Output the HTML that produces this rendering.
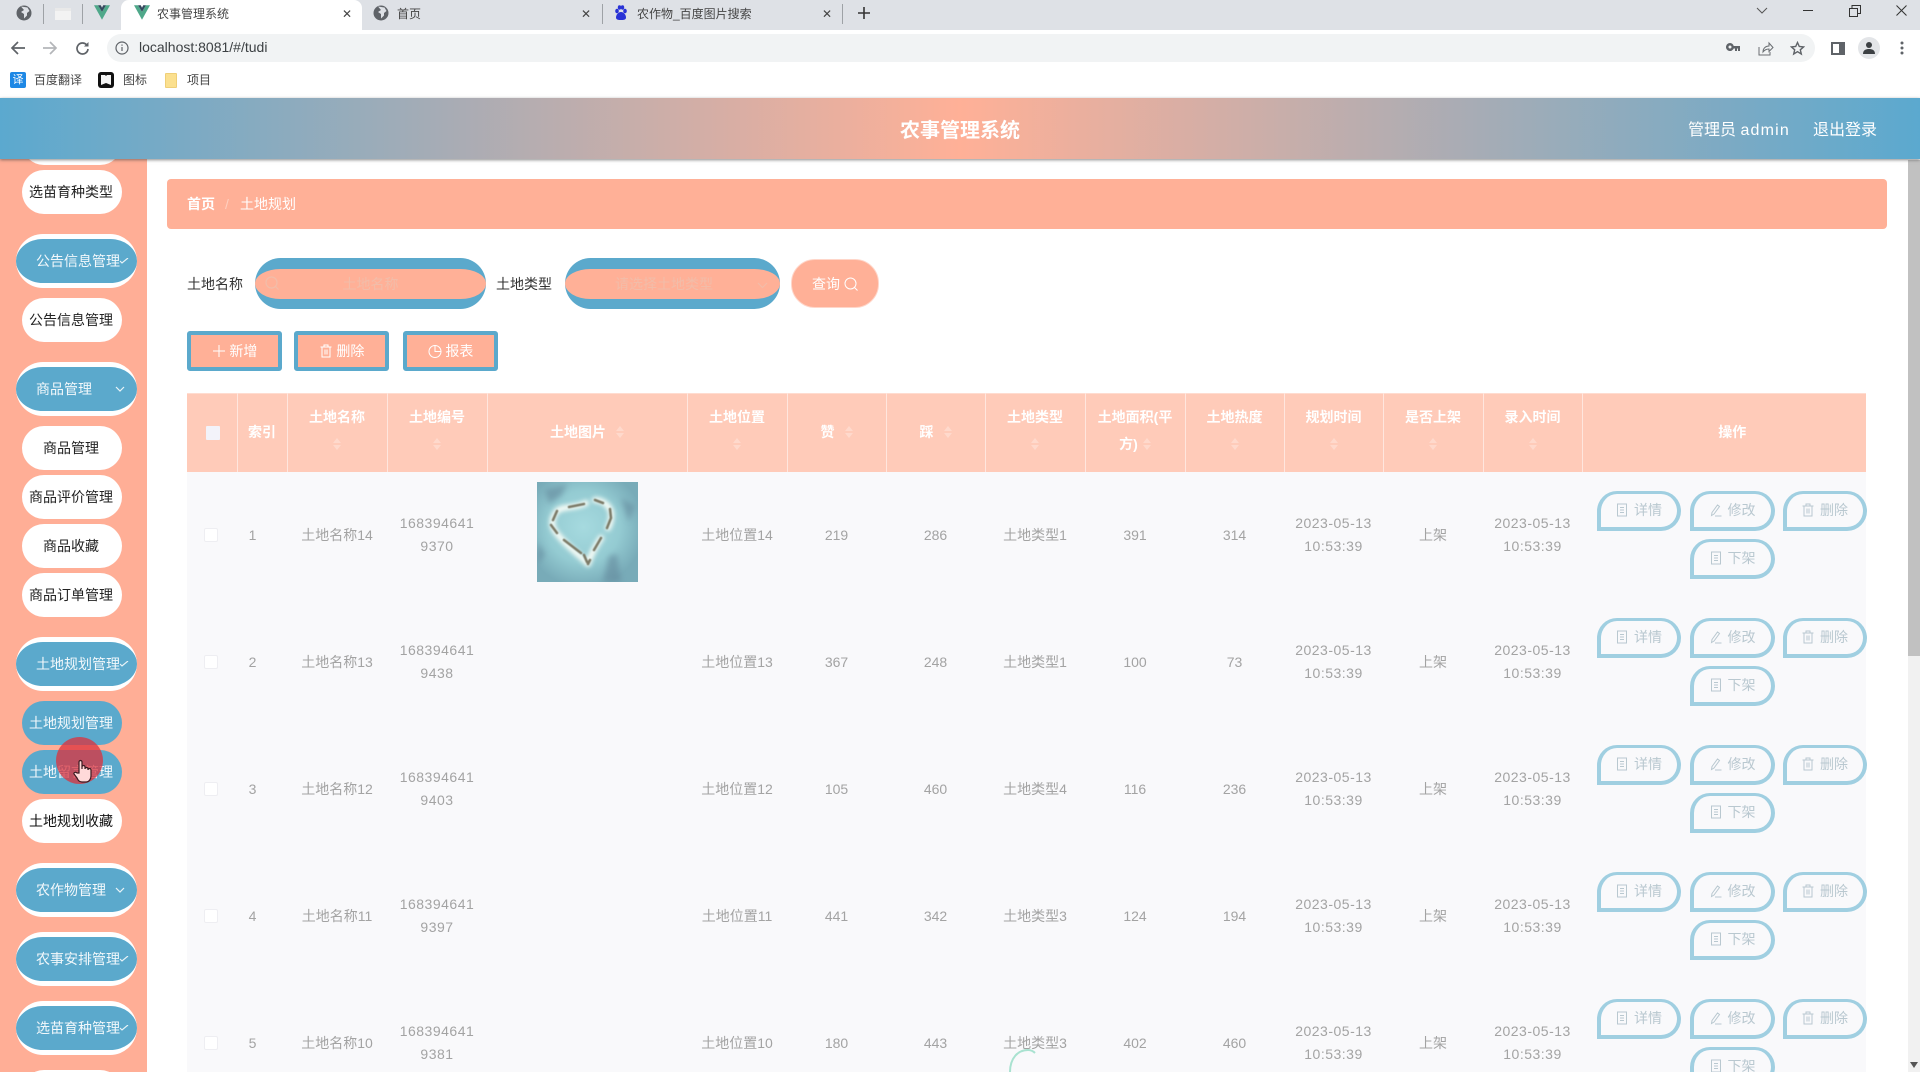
<!DOCTYPE html>
<html lang="zh"><head><meta charset="utf-8"><title>农事管理系统</title>
<style>
*{box-sizing:border-box}
html,body{margin:0;padding:0;width:1920px;height:1072px;overflow:hidden;background:#fff;font-family:"Liberation Sans","Noto Sans CJK SC",sans-serif}
#root{position:absolute;left:0;top:0;width:1920px;height:1072px;overflow:hidden;background:#fff}
.a{position:absolute}
#tabs{left:0;top:0;width:1920px;height:30px;background:#dee1e6}
#pin{left:0;top:0;width:121px;height:30px;background:#dee1e6;border-bottom-right-radius:8px}
#atab{left:121px;top:0;width:241px;height:30px;background:#fff;border-radius:8px 8px 0 0}
.sep{width:1px;height:20px;top:4px;background:#9ea2a6}
.tt{font-size:12px;color:#454545;top:4px;line-height:20px;white-space:nowrap}
.x{font-size:12px;color:#444;top:4px;line-height:20px}
#addr{left:107px;top:34px;width:1708px;height:28px;border-radius:14px;background:#f1f3f4}
#url{left:139px;top:37px;font-size:14px;line-height:20px;color:#3c4043;white-space:nowrap}
.bm{font-size:12px;color:#444;top:70px;line-height:20px;white-space:nowrap}
#hd{left:0;top:98px;width:1920px;height:61px;background:linear-gradient(90deg,#5ba9cf 0%,#ffb097 50%,#5ba9cf 100%);box-shadow:0 1px 3px rgba(60,60,60,.6);z-index:5}
#hd span{position:absolute;color:#fff;white-space:nowrap}
#side{left:0;top:159px;width:147px;height:913px;background:#ffae96;overflow:hidden}
.p{position:absolute;left:22px;width:100px;height:44px;border-radius:22px;background:#fff;color:#222;font-size:14px;line-height:44px;text-align:center;white-space:nowrap;padding-right:2px}
.p.on{background:#5ba9cc;color:#f2f8fb}
.g{position:absolute;left:16px;width:121px;height:54px;border-radius:27px;background:#5ba9cc;border-top:5px solid #fff;border-bottom:5px solid #fff;color:#f2f8fb;font-size:14px;line-height:44px;padding-left:20px;white-space:nowrap}
.g svg{position:absolute;top:19px;width:10px;height:6px;fill:none;stroke:#eaf4f8;stroke-width:1.2}
#bc{left:167px;top:179px;width:1720px;height:50px;background:#ffb097;border-radius:4px;color:#fff;font-size:14px;line-height:50px}
.lb{font-size:14px;line-height:20px;color:#333;top:274px;white-space:nowrap}
.ipt{top:258px;height:51px;border-radius:26px;background:#ffb097;border-top:11px solid #5ba9cc;border-bottom:10px solid #5ba9cc;color:#f2bda9;font-size:14px;line-height:31px;text-align:center;white-space:nowrap}
#q{left:791px;top:259px;width:88px;height:49px;border-radius:24px;background:#ffb097;border:1px solid #ffd6c9;color:#fff;font-size:14px;line-height:48px;padding-left:20px}
.b{top:331px;height:40px;background:#ffb097;border:4px solid #5ba9cc;border-radius:3px;color:#fff;font-size:14px;line-height:33px;text-align:center;white-space:nowrap}
.b svg,#q svg{vertical-align:-2px;width:14px;height:14px;fill:none;stroke:#fff;stroke-width:1}
#tb{left:187px;top:393px;width:1679px;border-collapse:collapse;table-layout:fixed;font-size:14px;color:#a3a3a3;text-align:center}
#tb th{height:78px;background:#ffcbb9;color:#fff;font-weight:700;border-right:1px solid #ffe6de;border-top:1px solid #ffdcd0;line-height:27px;padding:0 10px;vertical-align:middle}
#tb th:last-child{border-right:0;padding-left:26px}
#tb td{height:127px;background:#f9f9fb;line-height:23px;padding:0 10px;vertical-align:middle;position:relative}
.two{position:relative;top:-2px;word-break:break-all}
.s{display:inline-block;width:8px;height:12px;vertical-align:-1px;margin-left:10px;position:relative}
.s:before,.s:after{content:"";position:absolute;left:0;border-left:4px solid transparent;border-right:4px solid transparent}
.s:before{top:0;border-bottom:5px solid rgba(255,255,255,.28)}
.s:after{bottom:0;border-top:5px solid rgba(255,255,255,.28)}
.two .s{margin-left:0}
.n{letter-spacing:.5px;margin:0 -4px;white-space:nowrap}
.cb{display:block;margin:0 auto 0 7px;width:14px;height:14px;background:#fff;border:1px solid #eeeef2;border-radius:2px}
.o{position:absolute;height:40px;border:4px solid #a0cfe1;border-radius:20px 20px 20px 0;color:#b9c8d0;font-size:14px;line-height:32px;text-align:center;white-space:nowrap;background:#f9f9fb;border-top-width:3px}
.o svg{width:12px;height:14px;vertical-align:-2px;fill:none;stroke:#b9c8d0;stroke-width:1;margin-right:6px}
.o1{left:15px;width:84px}.o2{left:108px;width:85px}.o3{left:201px;width:84px}
.t1{top:19px}.t2{top:67px}
#sb{left:1908px;top:160px;width:12px;height:912px;background:#f1f1f1}
#th{left:0;top:0;width:12px;height:496px;background:#c1c1c1}
</style></head><body>
<div id="root">
<svg width="0" height="0" style="position:absolute"><defs>
<symbol id="doc" viewBox="0 0 12 14"><rect x="1.500" y="1" width="9" height="12"/><path d="M4 4.500h4M4 7h4M4 9.500h4"/></symbol>
<symbol id="pen" viewBox="0 0 12 14"><path d="M2 9.500 7.500 2l2 1.500L4 11l-2.500 1.500zM5 13h6.500"/></symbol>
<symbol id="del" viewBox="0 0 12 14"><rect x="2" y="3" width="8" height="10"/><path d="M.5 3h11M4 3V1h4v2M5 5.500v5M7 5.500v5"/></symbol>
<symbol id="vue" viewBox="0 0 20 18"><path d="M0 0h5l5 8 5-8h5L10 18z" fill="#4fa88a"/><path d="M5 0h3.500L10 3l1.500-3H15l-5 8z" fill="#34495e"/></symbol>
<symbol id="globe" viewBox="0 0 16 16"><circle cx="8" cy="8" r="7.500" fill="#5f6368"/><path d="M5 1.500 8 5 5 7l3 2 0 4.500 3-3V8l2.500-2-2-3.500z" fill="#dee1e6"/></symbol>
</defs></svg>

<div class="a" id="tabs"></div><div class="a" id="pin"></div><div class="a" id="atab"></div>
<svg class="a" style="left:16px;top:5px" width="16" height="16"><use href="#globe"/></svg>
<div class="a sep" style="left:43px"></div>
<div class="a" style="left:55px;top:8px;width:16px;height:12px;background:#f3f3f3;border-top:3px solid #e9e9e9"></div>
<div class="a sep" style="left:82px"></div>
<svg class="a" style="left:94px;top:5px" width="16" height="15"><use href="#vue"/></svg>
<svg class="a" style="left:134px;top:5px" width="16" height="15"><use href="#vue"/></svg>
<div class="a tt" style="left:157px">农事管理系统</div>
<div class="a x" style="left:342px">✕</div>
<svg class="a" style="left:373px;top:5px" width="16" height="16"><use href="#globe"/></svg>
<div class="a tt" style="left:397px">首页</div>
<div class="a x" style="left:581px">✕</div>
<div class="a sep" style="left:602px"></div>
<svg class="a" style="left:613px;top:5px" width="16" height="16" viewBox="0 0 16 16"><g fill="#2932d6"><ellipse cx="4" cy="6" rx="1.800" ry="2.300"/><ellipse cx="12" cy="6" rx="1.800" ry="2.300"/><ellipse cx="6.500" cy="2.500" rx="1.700" ry="2.200"/><ellipse cx="9.500" cy="2.500" rx="1.700" ry="2.200"/><path d="M8 7c-3 0-5 3-5 5.500S6 15 8 15s5 0 5-2.500S11 7 8 7z"/></g></svg>
<div class="a tt" style="left:637px">农作物_百度图片搜索</div>
<div class="a x" style="left:822px">✕</div>
<div class="a sep" style="left:842px"></div>
<svg class="a" style="left:857px;top:6px" width="14" height="14" fill="none" stroke="#333" stroke-width="1.600"><path d="M7 1v12M1 7h12"/></svg>
<svg class="a" style="left:1755px;top:6px" width="14" height="10" fill="none" stroke="#555"><path d="M2 2l5 5 5-5"/></svg>
<div class="a" style="left:1803px;top:10px;width:10px;height:1px;background:#333"></div>
<svg class="a" style="left:1849px;top:5px" width="12" height="12" fill="none" stroke="#333"><path d="M.5 3.500h8v8h-8zM3 3.500V.5h8.500v8H8.500"/></svg>
<svg class="a" style="left:1896px;top:5px" width="11" height="11" fill="none" stroke="#333"><path d="M.5.5l10 10M10.500.5l-10 10"/></svg>

<div class="a" id="addr"></div>
<svg class="a" style="left:10px;top:41px" width="16" height="14" fill="none" stroke="#5f6368" stroke-width="1.700"><path d="M15 7H2M8 1 2 7l6 6"/></svg>
<svg class="a" style="left:42px;top:41px" width="16" height="14" fill="none" stroke="#b4b6b9" stroke-width="1.700"><path d="M1 7h13M8 1l6 6-6 6"/></svg>
<svg class="a" style="left:75px;top:41px" width="15" height="15" fill="none" stroke="#5f6368" stroke-width="1.700"><path d="M13 8a5.500 5.500 0 1 1-1.500-4.300"/><path d="M13.500 1v4.500H9" fill="#5f6368" stroke="none"/></svg>
<svg class="a" style="left:115px;top:41px" width="14" height="14" fill="none" stroke="#5f6368" stroke-width="1.200"><circle cx="7" cy="7" r="6"/><path d="M7 6v4M7 3.500v1.200"/></svg>
<div class="a" id="url">localhost:8081/#/tudi</div>
<svg class="a" style="left:1726px;top:43px" width="15" height="10" fill="#5f6368"><path d="M4 0a4 4 0 1 0 3.700 5.500H9V8h2V5.500h1V8h2V3H7.700A4 4 0 0 0 4 0zm0 2.500a1.500 1.500 0 1 1 0 3 1.500 1.500 0 0 1 0-3z"/></svg>
<svg class="a" style="left:1758px;top:41px" width="16" height="15" fill="none" stroke="#6a6e72"><path d="M1 6v8h11V11M5 11c0-4 3-6 6-6V2l4 4.500-4 4V8c-3 0-4.500 1-6 3z"/></svg>
<svg class="a" style="left:1790px;top:41px" width="15" height="15" fill="none" stroke="#5f6368" stroke-width="1.400"><path d="M7.500 1.500l1.800 4 4.300.4-3.300 2.900 1 4.200-3.800-2.300-3.800 2.300 1-4.200L1.400 5.900l4.300-.4z"/></svg>
<div class="a" style="left:1831px;top:42px;width:14px;height:13px;border:2px solid #5f6368;border-right-width:6px"></div>
<div class="a" style="left:1858px;top:37px;width:22px;height:22px;border-radius:50%;background:#e3e5e8"></div>
<svg class="a" style="left:1862px;top:41px" width="14" height="14" fill="#3c4043"><circle cx="7" cy="4" r="3"/><path d="M1 13c0-4 3-5 6-5s6 1 6 5z"/></svg>
<svg class="a" style="left:1900px;top:41px" width="4" height="14" fill="#5f6368"><circle cx="2" cy="2" r="1.500"/><circle cx="2" cy="7" r="1.500"/><circle cx="2" cy="12" r="1.500"/></svg>

<div class="a" style="left:10px;top:72px;width:16px;height:16px;border-radius:2px;background:#1e88e5;color:#fff;font-size:11px;line-height:16px;text-align:center">译</div>
<div class="a bm" style="left:34px">百度翻译</div>
<div class="a" style="left:98px;top:72px;width:16px;height:16px;border-radius:3px;background:#111"></div>
<svg class="a" style="left:101px;top:75px" width="10" height="10" fill="#f4f4f4"><path d="M0 0h4l1 1 1-1h4v10L5 8 0 10z"/></svg>
<div class="a bm" style="left:123px">图标</div>
<div class="a" style="left:165px;top:73px;width:12px;height:15px;background:#fbe08f;border:1px solid #efcf78;border-radius:1px"></div>
<div class="a bm" style="left:187px">项目</div>

<div class="a" id="hd">
<span style="left:900px;top:19px;font-size:20px;line-height:28px;font-weight:700">农事管理系统</span>
<span style="left:1688px;top:21px;font-size:16px;line-height:24px">管理员 <span style="position:static;letter-spacing:1.200px">admin</span></span>
<span style="left:1813px;top:21px;font-size:16px;line-height:24px">退出登录</span>
</div>

<div class="a" id="side">
<div class="p" style="top:-38px"></div>
<div class="p" style="top:11px">选苗育种类型</div>
<div class="g" style="top:75px">公告信息管理<svg style="left:103px" viewBox="0 0 10 6"><path d="M1 3l2 2 6-5"/></svg></div>
<div class="p" style="top:139px">公告信息管理</div>
<div class="g" style="top:203px">商品管理<svg style="left:99px" viewBox="0 0 10 6"><path d="M1 1l4 4 4-4"/></svg></div>
<div class="p" style="top:267px">商品管理</div>
<div class="p" style="top:316px">商品评价管理</div>
<div class="p" style="top:365px">商品收藏</div>
<div class="p" style="top:414px">商品订单管理</div>
<div class="g" style="top:478px">土地规划管理<svg style="left:103px" viewBox="0 0 10 6"><path d="M1 3l2 2 6-5"/></svg></div>
<div class="p on" style="top:542px">土地规划管理</div>
<div class="p on" style="top:591px">土地留言管理</div>
<div class="p" style="top:640px;color:#111">土地规划收藏</div>
<div class="g" style="top:704px">农作物管理<svg style="left:99px" viewBox="0 0 10 6"><path d="M1 1l4 4 4-4"/></svg></div>
<div class="g" style="top:773px">农事安排管理<svg style="left:103px" viewBox="0 0 10 6"><path d="M1 3l2 2 6-5"/></svg></div>
<div class="g" style="top:842px">选苗育种管理<svg style="left:103px" viewBox="0 0 10 6"><path d="M1 3l2 2 6-5"/></svg></div>
<div class="p" style="top:911px"></div>
</div>
<div class="a" style="left:56px;top:737px;width:47px;height:47px;border-radius:50%;background:rgba(220,50,60,.75);z-index:6"></div>
<svg class="a" style="left:73px;top:759px;z-index:7" width="20" height="25" viewBox="0 0 20 25"><path d="M6 14V3a1.500 1.500 0 0 1 3 0v7l0-2a1.500 1.500 0 0 1 3 0v2a1.500 1.500 0 0 1 3 0v1a1.500 1.500 0 0 1 3 0v6c0 3-2 6-5 6H9c-3 0-4-2-5-4l-3-4c-.5-1.500 1.500-2.500 3-1z" fill="#ffd9d9" stroke="#3a1a20" stroke-width="1.200"/></svg>

<div class="a" id="bc"><span class="a" style="left:20px;font-weight:700">首页</span><span class="a" style="left:58px;color:#ffcfbf">/</span><span class="a" style="left:73px">土地规划</span></div>

<div class="a lb" style="left:187px">土地名称</div>
<div class="a ipt" style="left:255px;width:231px">土地名称</div>
<svg class="a" style="left:265px;top:276px;fill:none;stroke:#f2bda9;stroke-width:1.200" width="14" height="15"><circle cx="6.500" cy="6.500" r="5.500"/><path d="M10.500 10.500l3 3"/></svg>
<div class="a lb" style="left:496px">土地类型</div>
<div class="a ipt" style="left:565px;width:215px;padding-right:17px">请选择土地类型</div>
<svg class="a" style="left:757px;top:282px;fill:none;stroke:#f2bda9" width="11" height="7"><path d="M1 1l4.500 4.500L10 1"/></svg>
<div class="a" id="q">查询 <svg viewBox="0 0 14 14"><circle cx="6.500" cy="6.500" r="5.500"/><path d="M10.500 10.500l3 3"/></svg></div>

<div class="a b" style="left:187px;width:95px"><svg viewBox="0 0 14 14"><path d="M7 1v12M1 7h12"/></svg> 新增</div>
<div class="a b" style="left:294px;width:95px"><svg viewBox="0 0 12 14"><use href="#del"/></svg> 删除</div>
<div class="a b" style="left:403px;width:95px"><svg viewBox="0 0 14 14"><circle cx="7" cy="7.500" r="6"/><path d="M7 1.500v6h6"/></svg> 报表</div>

<table class="a" id="tb">
<colgroup><col style="width:50px"><col style="width:50px"><col style="width:100px"><col style="width:100px"><col style="width:200px"><col style="width:100px"><col style="width:99px"><col style="width:99px"><col style="width:100px"><col style="width:100px"><col style="width:99px"><col style="width:99px"><col style="width:100px"><col style="width:99px"><col style="width:284px"></colgroup>
<thead><tr>
<th style="padding:0"><span style="display:block;width:14px;height:14px;margin:0 0 0 19px;background:#f3f3fa;border-radius:1px"></span></th>
<th style="padding:0">索引</th>
<th><div class="two">土地名称<br><i class="s"></i></div></th>
<th><div class="two">土地编号<br><i class="s"></i></div></th>
<th>土地图片<i class="s"></i></th>
<th><div class="two">土地位置<br><i class="s"></i></div></th>
<th>赞<i class="s"></i></th>
<th>踩<i class="s"></i></th>
<th><div class="two">土地类型<br><i class="s"></i></div></th>
<th style="padding:0 8px"><div class="two">土地面积(平<br>方)<i class="s" style="margin-left:5px"></i></div></th>
<th><div class="two">土地热度<br><i class="s"></i></div></th>
<th><div class="two">规划时间<br><i class="s"></i></div></th>
<th><div class="two">是否上架<br><i class="s"></i></div></th>
<th><div class="two">录入时间<br><i class="s"></i></div></th>
<th>操作</th>
</tr></thead>
<tbody>
<tr><td style="padding:0 10px"><span class="cb"></span></td><td style="padding:0 19px 0 0">1</td><td>土地名称14</td><td><div class="n">168394641<br>9370</div></td>
<td><svg class="a" style="left:50px;top:10px" width="101" height="100" viewBox="0 0 101 100"><defs><radialGradient id="rg" cx=".46" cy=".45" r=".6"><stop offset="0" stop-color="#a6dadf"/><stop offset=".6" stop-color="#94cbd2"/><stop offset="1" stop-color="#78abb8"/></radialGradient><filter id="bl" x="-20%" y="-20%" width="140%" height="140%"><feGaussianBlur stdDeviation="2.200"/></filter><filter id="bl2" x="-50%" y="-50%" width="200%" height="200%"><feGaussianBlur stdDeviation="3"/></filter><filter id="bl3"><feGaussianBlur stdDeviation=".6"/></filter></defs><rect width="101" height="100" fill="url(#rg)"/><g fill="#63899c" opacity=".6" filter="url(#bl2)"><path d="M8 8 30 2 24 14 12 22zM84 16 98 24 92 40zM66 100 72 74 80 72 84 100zM0 60 8 72 0 84z"/></g><path d="M51 82C46 76 30 64 22 54 14 46 13 38 20 29 26 24 40 26 49 21M58 18C64 18 72 22 74 30 75 36 73 42 71 46M64 56C60 62 54 72 51 82" fill="none" stroke="#f6fcf6" stroke-width="6" stroke-linecap="round" filter="url(#bl)"/><path d="M50 80 47 73M44 71 27 58M20 51 14 43M16 38 20 29M32 25 47 22M58 18 66 21M73 27 74 36 70 46M64 56 57 68M53 78 51 82" fill="none" stroke="#7c7a68" stroke-width="2.600" stroke-linecap="round" filter="url(#bl3)"/></svg></td>
<td>土地位置14</td><td>219</td><td>286</td><td>土地类型1</td><td>391</td><td>314</td><td><div class="n">2023-05-13<br>10:53:39</div></td><td>上架</td><td><div class="n">2023-05-13<br>10:53:39</div></td>
<td><div class="o o1 t1"><svg><use href="#doc"/></svg>详情</div><div class="o o2 t1"><svg><use href="#pen"/></svg>修改</div><div class="o o3 t1"><svg><use href="#del"/></svg>删除</div><div class="o o2 t2"><svg><use href="#doc"/></svg>下架</div></td></tr>
<tr><td style="padding:0 10px"><span class="cb"></span></td><td style="padding:0 19px 0 0">2</td><td>土地名称13</td><td><div class="n">168394641<br>9438</div></td><td></td>
<td>土地位置13</td><td>367</td><td>248</td><td>土地类型1</td><td>100</td><td>73</td><td><div class="n">2023-05-13<br>10:53:39</div></td><td>上架</td><td><div class="n">2023-05-13<br>10:53:39</div></td>
<td><div class="o o1 t1"><svg><use href="#doc"/></svg>详情</div><div class="o o2 t1"><svg><use href="#pen"/></svg>修改</div><div class="o o3 t1"><svg><use href="#del"/></svg>删除</div><div class="o o2 t2"><svg><use href="#doc"/></svg>下架</div></td></tr>
<tr><td style="padding:0 10px"><span class="cb"></span></td><td style="padding:0 19px 0 0">3</td><td>土地名称12</td><td><div class="n">168394641<br>9403</div></td><td></td>
<td>土地位置12</td><td>105</td><td>460</td><td>土地类型4</td><td>116</td><td>236</td><td><div class="n">2023-05-13<br>10:53:39</div></td><td>上架</td><td><div class="n">2023-05-13<br>10:53:39</div></td>
<td><div class="o o1 t1"><svg><use href="#doc"/></svg>详情</div><div class="o o2 t1"><svg><use href="#pen"/></svg>修改</div><div class="o o3 t1"><svg><use href="#del"/></svg>删除</div><div class="o o2 t2"><svg><use href="#doc"/></svg>下架</div></td></tr>
<tr><td style="padding:0 10px"><span class="cb"></span></td><td style="padding:0 19px 0 0">4</td><td>土地名称11</td><td><div class="n">168394641<br>9397</div></td><td></td>
<td>土地位置11</td><td>441</td><td>342</td><td>土地类型3</td><td>124</td><td>194</td><td><div class="n">2023-05-13<br>10:53:39</div></td><td>上架</td><td><div class="n">2023-05-13<br>10:53:39</div></td>
<td><div class="o o1 t1"><svg><use href="#doc"/></svg>详情</div><div class="o o2 t1"><svg><use href="#pen"/></svg>修改</div><div class="o o3 t1"><svg><use href="#del"/></svg>删除</div><div class="o o2 t2"><svg><use href="#doc"/></svg>下架</div></td></tr>
<tr><td style="padding:0 10px"><span class="cb"></span></td><td style="padding:0 19px 0 0">5</td><td>土地名称10</td><td><div class="n">168394641<br>9381</div></td><td></td>
<td>土地位置10</td><td>180</td><td>443</td><td>土地类型3</td><td>402</td><td>460</td><td><div class="n">2023-05-13<br>10:53:39</div></td><td>上架</td><td><div class="n">2023-05-13<br>10:53:39</div></td>
<td><div class="o o1 t1"><svg><use href="#doc"/></svg>详情</div><div class="o o2 t1"><svg><use href="#pen"/></svg>修改</div><div class="o o3 t1"><svg><use href="#del"/></svg>删除</div><div class="o o2 t2"><svg><use href="#doc"/></svg>下架</div></td></tr>
</tbody></table>

<svg class="a" style="left:1005px;top:1045px;z-index:4" width="40" height="27" fill="none" stroke="#a9e2d0" stroke-width="2"><path d="M5 27C5 13 13 5 23 5 26 5 28 6 30 8"/></svg>

<div class="a" id="sb"><div class="a" id="th"></div><svg class="a" style="left:2px;top:902px" width="8" height="6"><path d="M0 0h8L4 6z" fill="#555"/></svg></div>
</div>
</body></html>
